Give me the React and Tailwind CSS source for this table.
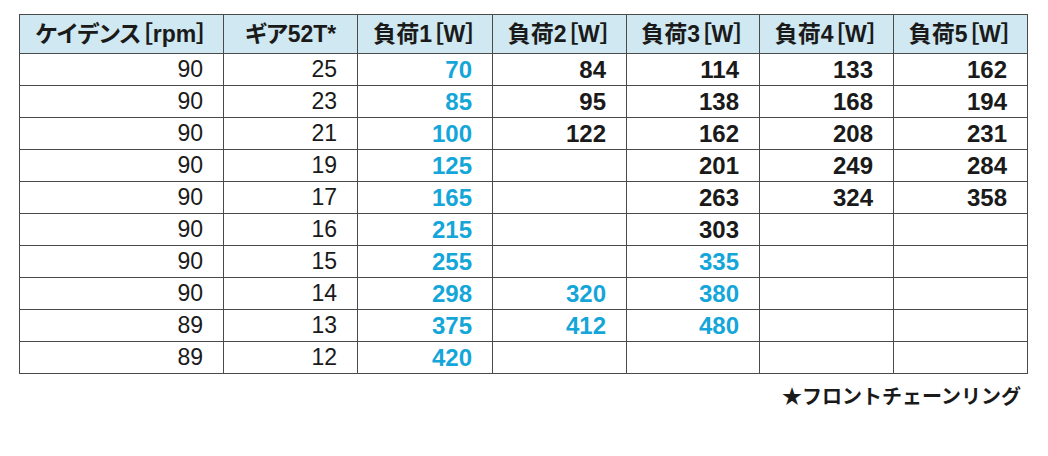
const headers = [
  "ケイデンス［rpm］",
  "ギア52T*",
  "負荷1［W］",
  "負荷2［W］",
  "負荷3［W］",
  "負荷4［W］",
  "負荷5［W］",
];

const widths = [204, 134, 135, 134, 133, 134, 134];

// b = blue value, k = black value
const rows = [
  [90, 25, "b70", "k84", "k114", "k133", "k162"],
  [90, 23, "b85", "k95", "k138", "k168", "k194"],
  [90, 21, "b100", "k122", "k162", "k208", "k231"],
  [90, 19, "b125", "", "k201", "k249", "k284"],
  [90, 17, "b165", "", "k263", "k324", "k358"],
  [90, 16, "b215", "", "k303", "", ""],
  [90, 15, "b255", "", "b335", "", ""],
  [90, 14, "b298", "b320", "b380", "", ""],
  [89, 13, "b375", "b412", "b480", "", ""],
  [89, 12, "b420", "", "", "", ""],
];

const font = {
  fontFamily: '"Liberation Sans", "Noto Sans CJK JP", sans-serif',
};

export default function App() {
  return (
    <div
      className="w-[1048px] h-[456px] bg-white pt-[14px] pl-[19px]"
      style={font}
    >
      <table className="table-fixed border-collapse w-[1008px]">
        <colgroup>
          {widths.map((w, i) => (
            <col key={i} style={{ width: w }} />
          ))}
        </colgroup>
        <thead>
          <tr className="h-[39px] bg-[#cfe8f1]">
            {headers.map((h) => (
              <th
                key={h}
                className="border border-[#4a4a4a] text-center text-[23px] font-bold text-[#1a1a1a] leading-none [font-feature-settings:'palt'] p-0"
              >
                {h}
              </th>
            ))}
          </tr>
        </thead>
        <tbody>
          {rows.map((r, i) => (
            <tr key={i} className="h-[32px]">
              {r.map((v, j) => {
                if (j < 2) {
                  return (
                    <td
                      key={j}
                      className="border border-[#4a4a4a] text-right pr-[20px] text-[23px] leading-none text-[#1a1a1a] p-0"
                    >
                      {v}
                    </td>
                  );
                }
                const blue = v.startsWith("b");
                return (
                  <td
                    key={j}
                    className={
                      "border border-[#4a4a4a] text-right pr-[20px] text-[24px] font-bold leading-none p-0 " +
                      (blue ? "text-[#14a6d9]" : "text-[#1a1a1a]")
                    }
                  >
                    {v.slice(1)}
                  </td>
                );
              })}
            </tr>
          ))}
        </tbody>
      </table>
      <div className="w-[1002px] text-right mt-[13px] text-[20px] font-bold text-[#1a1a1a] leading-none">
        ★フロントチェーンリング
      </div>
    </div>
  );
}
